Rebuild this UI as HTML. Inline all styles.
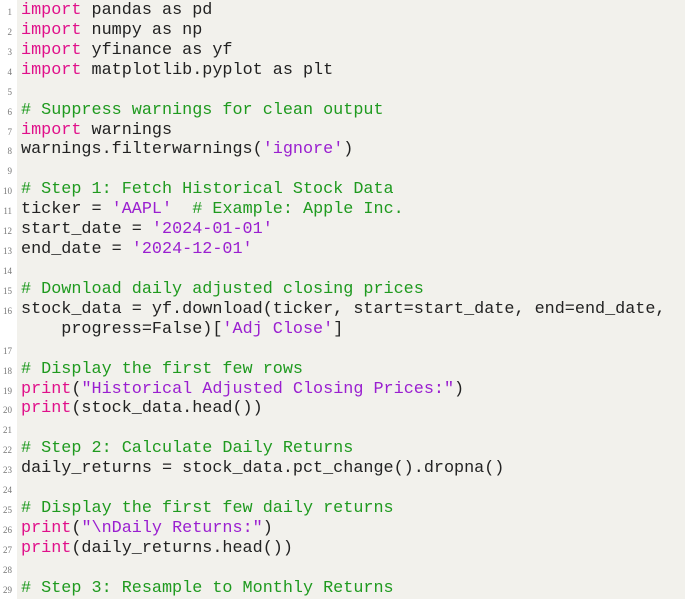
<!DOCTYPE html>
<html><head><meta charset="utf-8"><style>
html,body{margin:0;padding:0;background:#fff;width:685px;height:599px;overflow:hidden}
.bg{position:absolute;left:17px;top:0;width:668px;height:599px;background:#f2f1ec}
.code{position:absolute;left:0;top:1px;width:685px}
.l{position:relative;height:19.93px;line-height:19.93px;font-family:"Liberation Mono",monospace;font-size:16.8px;color:#222;white-space:pre;padding-left:21px}
.l i{position:absolute;left:0;top:2px;width:12px;text-align:right;font-style:normal;font-family:"Liberation Serif",serif;font-size:9px;color:#777}
.k{color:#e0108a}.c{color:#1f9a1f}.s{color:#9a1fd0}
</style></head><body>
<div class="bg"></div>
<div class="code">
<div class="l"><i>1</i><span class="k">import</span> pandas as pd</div>
<div class="l"><i>2</i><span class="k">import</span> numpy as np</div>
<div class="l"><i>3</i><span class="k">import</span> yfinance as yf</div>
<div class="l"><i>4</i><span class="k">import</span> matplotlib.pyplot as plt</div>
<div class="l"><i>5</i></div>
<div class="l"><i>6</i><span class="c"># Suppress warnings for clean output</span></div>
<div class="l"><i>7</i><span class="k">import</span> warnings</div>
<div class="l"><i>8</i>warnings.filterwarnings(<span class="s">'ignore'</span>)</div>
<div class="l"><i>9</i></div>
<div class="l"><i>10</i><span class="c"># Step 1: Fetch Historical Stock Data</span></div>
<div class="l"><i>11</i>ticker = <span class="s">'AAPL'</span>  <span class="c"># Example: Apple Inc.</span></div>
<div class="l"><i>12</i>start_date = <span class="s">'2024-01-01'</span></div>
<div class="l"><i>13</i>end_date = <span class="s">'2024-12-01'</span></div>
<div class="l"><i>14</i></div>
<div class="l"><i>15</i><span class="c"># Download daily adjusted closing prices</span></div>
<div class="l"><i>16</i>stock_data = yf.download(ticker, start=start_date, end=end_date,</div>
<div class="l">    progress=False)[<span class="s">'Adj Close'</span>]</div>
<div class="l"><i>17</i></div>
<div class="l"><i>18</i><span class="c"># Display the first few rows</span></div>
<div class="l"><i>19</i><span class="k">print</span>(<span class="s">"Historical Adjusted Closing Prices:"</span>)</div>
<div class="l"><i>20</i><span class="k">print</span>(stock_data.head())</div>
<div class="l"><i>21</i></div>
<div class="l"><i>22</i><span class="c"># Step 2: Calculate Daily Returns</span></div>
<div class="l"><i>23</i>daily_returns = stock_data.pct_change().dropna()</div>
<div class="l"><i>24</i></div>
<div class="l"><i>25</i><span class="c"># Display the first few daily returns</span></div>
<div class="l"><i>26</i><span class="k">print</span>(<span class="s">"\nDaily Returns:"</span>)</div>
<div class="l"><i>27</i><span class="k">print</span>(daily_returns.head())</div>
<div class="l"><i>28</i></div>
<div class="l"><i>29</i><span class="c"># Step 3: Resample to Monthly Returns</span></div>
</div>
</body></html>
